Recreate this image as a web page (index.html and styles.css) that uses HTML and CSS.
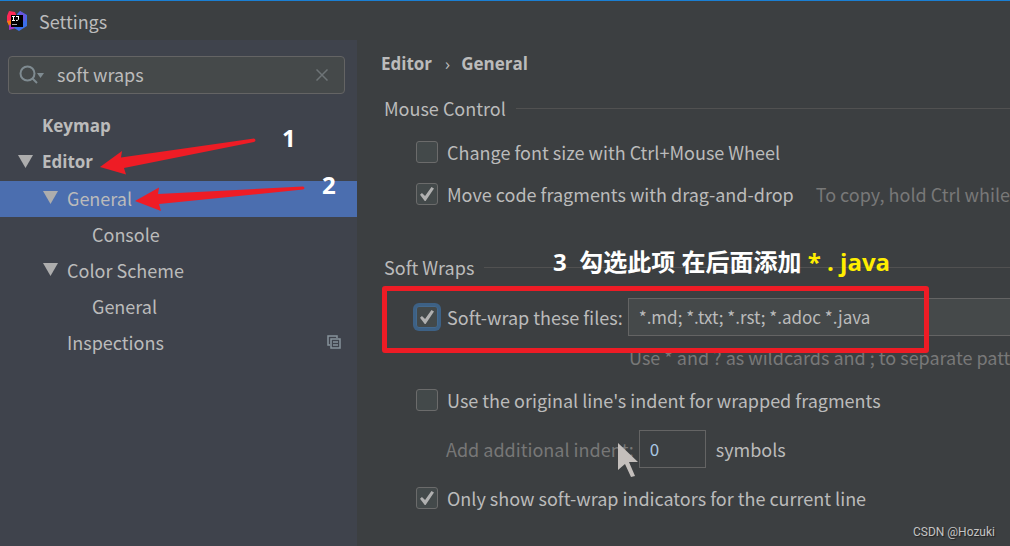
FILE: index.html
```
<!DOCTYPE html>
<html lang="en">
<head>
    <meta charset="UTF-8">
    <meta name="viewport" content="width=device-width, initial-scale=1.0">
    <title>Settings</title>
    <link rel="stylesheet" href="styles.css">
</head>
<body>
    <div class="window">
        <header class="titlebar">
            <svg class="logo" viewBox="0 0 20 20" aria-hidden="true">
                <path d="M0 5L2 0L8 1L10 6L4 14L0 11z" fill="#fe2857"/>
                <path d="M0 10L5 9L5 15L2 15z" fill="#f97a12"/>
                <path d="M2 14L9 12L9 17L2 19z" fill="#a535c4"/>
                <path d="M10 3L13 0L20 4L20 15L12 20L7 17z" fill="#3b6fe8"/>
                <path d="M13 0L19 4L18 11L12 5z" fill="#6a55dd"/>
                <rect x="4" y="4" width="12" height="12" fill="#000"/>
                <path d="M5 5.500h3M6.500 5.500v4M5 9.500h3M9 5.500h3M11.500 5v3.500q0 1-2.500 1" stroke="#fff" fill="none"/>
                <path d="M5 13.500h5" stroke="#aaa"/>
            </svg>
            <span class="title">Settings</span>
        </header>

        <div class="main">
            <aside class="sidebar">
                <div class="search">
                    <svg class="search-icon" viewBox="0 0 26 20" aria-hidden="true">
                        <circle cx="8.500" cy="8.500" r="7" fill="none" stroke="#7f8b91" stroke-width="2"/>
                        <path d="M13 13l5 5" stroke="#7f8b91" stroke-width="2"/>
                        <path d="M18 8h7l-3.500 5z" fill="#7f8b91"/>
                    </svg>
                    <input type="text" class="search-input" aria-label="Search settings" value="soft wraps">
                    <button type="button" class="clear" aria-label="Clear">
                        <svg viewBox="0 0 12 12"><path d="M0.500 0.500l11 11M11.500 0.500l-11 11" stroke="#6e7477" stroke-width="1.500"/></svg>
                    </button>
                </div>

                <ul class="tree">
                    <li class="row level-1"><a href="#keymap">Keymap</a></li>
                    <li class="row level-1 expanded"><a href="#editor">Editor</a></li>
                    <li class="row level-2 expanded selected"><a href="#general">General</a></li>
                    <li class="row level-3"><a href="#console">Console</a></li>
                    <li class="row level-2 expanded"><a href="#color-scheme">Color Scheme</a></li>
                    <li class="row level-3"><a href="#color-general">General</a></li>
                    <li class="row level-2">
                        <a href="#inspections">Inspections</a>
                        <svg class="copy-icon" viewBox="0 0 14 14" fill="none" stroke="#87939a" stroke-width="1.500" aria-hidden="true">
                            <path d="M3 10H1V1h9v2"/>
                            <path d="M4 4h9v9H4zM6 7h5M6 10h5"/>
                        </svg>
                    </li>
                </ul>
            </aside>

            <main class="content">
                <nav class="breadcrumb">
                    <a href="#editor">Editor</a><span class="sep">›</span><a href="#general">General</a>
                </nav>

                <section class="group">
                    <h2>Mouse Control</h2>
                    <div class="option">
                        <input type="checkbox" id="wheel">
                        <label for="wheel">Change font size with Ctrl+Mouse Wheel</label>
                    </div>
                    <div class="option">
                        <input type="checkbox" id="dnd" checked>
                        <label for="dnd">Move code fragments with drag-and-drop</label>
                        <span class="comment">To copy, hold Ctrl while</span>
                    </div>
                </section>

                <section class="group">
                    <h2>Soft Wraps</h2>
                    <div class="option">
                        <input type="checkbox" id="soft-wrap" class="focused" checked>
                        <label for="soft-wrap">Soft-wrap these files:</label>
                        <input type="text" class="field masks" aria-label="File masks" value="*.md; *.txt; *.rst; *.adoc *.java">
                    </div>
                    <p class="hint">Use * and ? as wildcards and ; to separate patte</p>
                    <div class="option">
                        <input type="checkbox" id="indent">
                        <label for="indent">Use the original line's indent for wrapped fragments</label>
                    </div>
                    <div class="option additional">
                        <label for="symbols">Add additional indent:</label>
                        <input type="text" id="symbols" class="field number" value="0">
                        <span>symbols</span>
                    </div>
                    <div class="option">
                        <input type="checkbox" id="indicators" checked>
                        <label for="indicators">Only show soft-wrap indicators for the current line</label>
                    </div>
                </section>
            </main>
        </div>

        <!-- step marks drawn over the window -->
        <svg class="arrows" viewBox="0 0 320 220" aria-hidden="true">
            <path d="M100 167L122 151L121 157.500L254 138.500Q257 140 254 142L124 168L126 174.500z" fill="#ee1c25"/>
            <path d="M135 201L159 187.500L158 194L303 186.500Q306 188 303 189.500L159 204L161 211z" fill="#ee1c25"/>
        </svg>
        <div class="frame"></div>
        <span class="note note-1">1</span>
        <span class="note note-2">2</span>
        <span class="note note-3">3&nbsp; 勾选此项 在后面添加 <em>* . java</em></span>
        <svg class="cursor" viewBox="0 0 20 34" aria-hidden="true">
            <path d="M0 0L20 19H11L17 33L13 34L7 21L0 27z" fill="#c4bfbc"/>
        </svg>
        <span class="watermark">CSDN @Hozuki</span>
    </div>
</body>
</html>
```
FILE: styles.css
```
* {
    box-sizing: border-box;
}
body {
    margin: 0;
    background: #3c3f41;
    color: #bbbbbb;
    font-family: "Noto Sans CJK SC", sans-serif;
    font-size: 18px;
    line-height: 24px;
}
a {
    color: inherit;
    text-decoration: none;
}
input, button {
    margin: 0;
    color: inherit;
    font: inherit;
}
.window {
    position: relative;
    display: flex;
    flex-direction: column;
    min-height: 100vh;
    border-top: 1px solid #1a7fd4;
    overflow: hidden;
}
.titlebar {
    display: flex;
    align-items: center;
    gap: 12px;
    height: 39px;
    padding-left: 7px;
}
.logo {
    width: 20px;
    height: 20px;
}
.main {
    display: flex;
    flex: 1;
}

/* left side */
.sidebar {
    flex: 0 0 357px;
    padding-top: 16px;
    background: #3f434c;
}
.search {
    display: flex;
    align-items: center;
    height: 38px;
    margin: 0 12px 0 8px;
    padding: 0 16px 0 10px;
    background: #45494a;
    border: 1px solid #646464;
    border-radius: 4px;
}
.search-icon {
    width: 26px;
    height: 20px;
}
.search-input {
    flex: 1;
    min-width: 0;
    padding: 0 0 2px 12px;
    background: none;
    border: none;
    outline: none;
}
.clear {
    display: flex;
    padding: 0;
    background: none;
    border: none;
}
.clear svg {
    width: 12px;
    height: 12px;
}
.tree {
    margin: 15px 0 0;
    padding: 0;
    list-style: none;
}
.row {
    display: flex;
    align-items: center;
    height: 36px;
    padding-right: 16px;
    padding-bottom: 3px;
}
.level-1 {
    padding-left: 42px;
    font-family: "Open Sans", sans-serif;
    font-size: 17px;
    font-weight: bold;
}
.level-2 {
    padding-left: 67px;
}
.level-3 {
    padding-left: 92px;
}
.expanded::before {
    content: "";
    width: 15px;
    height: 13px;
    margin: 0 9px 0 -24px;
    background: #adadad;
    clip-path: polygon(0 0, 100% 0, 50% 100%);
}
.selected {
    background: #4b6eaf;
}
.copy-icon {
    width: 14px;
    height: 14px;
    margin-left: auto;
}

/* right side */
.content {
    flex: 1;
    min-width: 0;
    padding: 12px 0 16px 24px;
}
.breadcrumb {
    font-family: "Open Sans", sans-serif;
    font-size: 17px;
    font-weight: bold;
}
.sep {
    margin: 0 11px 0 13px;
    font-weight: normal;
}
.group {
    padding-left: 3px;
}
.group h2 {
    display: flex;
    align-items: center;
    gap: 10px;
    margin: 20px 0 11px;
    font-size: 18px;
    font-weight: normal;
}
.group h2::after {
    content: "";
    flex: 1;
    height: 1px;
    background: #515151;
}
.option {
    display: flex;
    align-items: center;
    height: 42px;
    padding-left: 32px;
    white-space: nowrap;
}
.group + .group h2 {
    margin: 40px 0 17px;
}
input[type="checkbox"] {
    display: flex;
    align-items: center;
    justify-content: center;
    flex: none;
    width: 22px;
    height: 22px;
    margin-right: 9px;
    appearance: none;
    background: #43494a;
    border: 1px solid #6b6b6b;
    border-radius: 3px;
}
input[type="checkbox"]:checked::before {
    content: "";
    width: 14px;
    height: 14px;
    background: #b0b0b0;
    clip-path: polygon(0 55%, 14% 42%, 36% 64%, 82% 0, 100% 10%, 40% 100%, 34% 100%);
}
input.focused {
    border-color: #43698e;
    box-shadow: 0 0 0 3px #3d6185;
}
.comment {
    margin-left: 22px;
    color: #787878;
}
.field {
    height: 38px;
    padding: 0 10px 2px;
    background: #45494a;
    border: 1px solid #646464;
    font-size: 17px;
    outline: none;
}
.masks {
    flex: 1;
    min-width: 0;
    margin-left: 5px;
    border-right: none;
}
.hint {
    margin: 7px 0 10px;
    padding-left: 245px;
    color: #787878;
    white-space: nowrap;
}
.additional {
    height: 56px;
    padding-left: 62px;
}
.additional label {
    color: #777777;
}
.number {
    width: 67px;
    margin: 0 10px 0 5px;
    background: none;
    color: #a9c8e4;
}

/* marks */
.arrows, .frame, .note, .cursor, .watermark {
    position: absolute;
    pointer-events: none;
}
.arrows {
    top: -1px;
    left: 0;
    width: 320px;
    height: 220px;
}
.frame {
    top: 285px;
    left: 382px;
    width: 547px;
    height: 67px;
    border: 5px solid #ee1c25;
    border-radius: 3px;
}
.note {
    color: #ffffff;
    font-family: "Open Sans", "Noto Sans CJK SC", sans-serif;
    font-size: 24px;
    font-weight: bold;
    line-height: 32px;
    white-space: nowrap;
}
.note em {
    color: #ffee00;
    font-style: normal;
}
.note-1 {
    top: 121px;
    left: 282px;
}
.note-2 {
    top: 168px;
    left: 322px;
}
.note-3 {
    top: 245px;
    left: 553px;
}
.cursor {
    top: 442px;
    left: 618px;
    width: 20px;
    height: 34px;
}
.watermark {
    right: 15px;
    bottom: 6px;
    color: #c4c4c4;
    font-family: Roboto, sans-serif;
    font-size: 12px;
    line-height: 16px;
    text-shadow: 1px 1px 1px #222222;
}
```
